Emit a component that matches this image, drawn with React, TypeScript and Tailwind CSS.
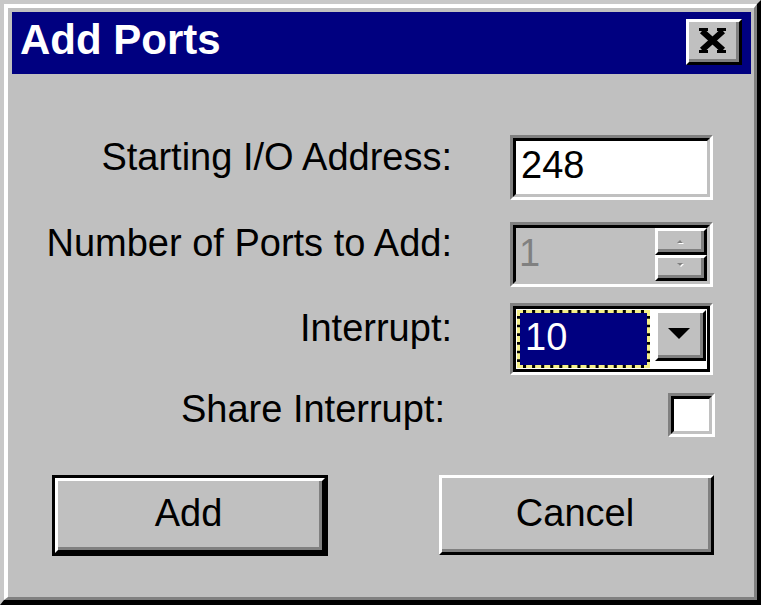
import React from "react";

const font = { fontFamily: '"Liberation Sans", Arial, sans-serif' };

const Sunken = ({ className, inner, children }: { className: string; inner: string; children: React.ReactNode }) => (
  <div className={`border-[3px] border-t-[#808080] border-l-[#808080] border-b-white border-r-white ${className}`}>
    <div className={`h-full w-full border-[3px] ${inner}`}>{children}</div>
  </div>
);

const Label = ({ text, className }: { text: string; className: string }) => (
  <div className={`w-[440px] shrink-0 text-right text-[38px] leading-[38px] text-black ${className}`}>{text}</div>
);

const SpinButton = ({ up }: { up: boolean }) => (
  <div className="h-[27px] border-[3px] border-t-white border-l-white border-b-black border-r-black bg-[#c0c0c0]">
    <div className="flex h-full items-center justify-center border-b-[3px] border-r-[3px] border-[#808080]">
      <svg width="12" height="8" viewBox="0 0 12 8">
        {up ? (
          <>
            <polygon points="3,7 9,7 6,4" fill="#ffffff" transform="translate(1,1)" />
            <polygon points="3,7 9,7 6,4" fill="#808080" />
          </>
        ) : (
          <>
            <polygon points="3,1 9,1 6,4" fill="#ffffff" transform="translate(1,1)" />
            <polygon points="3,1 9,1 6,4" fill="#808080" />
          </>
        )}
      </svg>
    </div>
  </div>
);

export default function App() {
  return (
    <div className="w-[761px] h-[605px] bg-[#c0c0c0] select-none" style={font}>
      <div className="h-full border-t-4 border-l-4 border-r-4 border-b-[5px] border-t-[#c8c8c8] border-l-[#c8c8c8] border-r-black border-b-black">
        <div className="flex h-full flex-col border-t-4 border-l-4 border-r-[3px] border-b-[3px] border-t-white border-l-white border-r-[#808080] border-b-[#808080] pt-[4px] pl-[4px] pr-[3px]">
          {/* title bar */}
          <div className="flex h-[62px] shrink-0 items-start justify-between bg-[#000080]">
            <div className="ml-[8px] pt-[7px] text-[42px] font-bold leading-[42px] text-white">Add Ports</div>
            <div className="mr-[9px] mt-[7px] h-[46px] w-[56px] border-[3px] border-t-white border-l-white border-b-black border-r-black bg-[#c0c0c0]">
              <div className="flex h-full items-center justify-center border-b-[3px] border-r-[3px] border-[#808080]">
                <svg width="27" height="25" viewBox="0 0 27 25">
                  <path d="M3 3 L24 22 M24 3 L3 22" stroke="#000" strokeWidth="6" strokeLinecap="butt" />
                  <path d="M0 1.5 H9 M18 1.5 H27 M0 23.5 H9 M18 23.5 H27" stroke="#000" strokeWidth="3" />
                </svg>
              </div>
            </div>
          </div>

          {/* body */}
          <div className="flex flex-1 flex-col pt-[61px]">
            <div className="flex h-[65px] items-start">
              <Label text="Starting I/O Address:" className="pt-[3px]" />
              <Sunken className="ml-[58px] h-[65px] w-[203px]" inner="border-t-black border-l-black border-b-[#c0c0c0] border-r-[#c0c0c0] bg-white">
                <div className="pl-[5px] pt-[5px] text-[38px] leading-[38px] text-black">248</div>
              </Sunken>
            </div>

            <div className="mt-[22px] flex h-[65px] items-start">
              <Label text="Number of Ports to Add:" className="pt-[2px]" />
              <Sunken className="ml-[58px] h-[65px] w-[203px]" inner="border-t-black border-l-black border-b-[#c0c0c0] border-r-[#c0c0c0] bg-[#c0c0c0]">
                <div className="flex h-full">
                  <div className="flex-1 pl-[3px] pt-[6px] text-[38px] leading-[38px] text-[#808080]">1</div>
                  <div className="flex w-[52px] flex-col">
                    <SpinButton up />
                    <SpinButton up={false} />
                  </div>
                </div>
              </Sunken>
            </div>

            <div className="mt-[16px] flex h-[72px] items-start">
              <Label text="Interrupt:" className="pt-[6px]" />
              <Sunken className="ml-[58px] h-[72px] w-[203px]" inner="border-black bg-white">
                <div className="flex h-full gap-[5px] p-[1px] pl-[1px]">
                  <div className="h-full flex-1 bg-black">
                    <div className="h-full border-[3px] border-dashed border-[#f4f08a] bg-[#000080] bg-clip-padding pl-[5px] pt-[5px] text-[38px] leading-[38px] text-white">
                      10
                    </div>
                  </div>
                  <div className="h-[51px] w-[51px] border-[3px] border-t-white border-l-white border-b-black border-r-black bg-[#c0c0c0]">
                    <div className="flex h-full items-center justify-center border-b-[3px] border-r-[3px] border-[#808080]">
                      <svg width="22" height="12" viewBox="0 0 22 12">
                        <polygon points="0,0 22,0 11,11" fill="#000" />
                      </svg>
                    </div>
                  </div>
                </div>
              </Sunken>
            </div>

            <div className="mt-[15px] flex h-[47px] items-start">
              <Label text="Share Interrupt:" className="pr-[7px]" />
              <Sunken className="ml-[216px] mt-[3px] h-[44px] w-[47px]" inner="border-t-black border-l-black border-b-[#c0c0c0] border-r-[#c0c0c0] bg-white">
                <div />
              </Sunken>
            </div>

            <div className="mt-[38px] flex items-start">
              <div className="ml-[40px] h-[81px] w-[276px] border-[3px] border-black">
                <div className="h-full border-[3px] border-t-white border-l-white border-b-black border-r-black">
                  <div className="flex h-full items-center justify-center border-b-[3px] border-r-[3px] border-[#808080] pb-[2px] text-[38px] leading-[38px] text-black">
                    Add
                  </div>
                </div>
              </div>
              <div className="ml-[111px] h-[80px] w-[275px] border-[3px] border-t-white border-l-white border-b-black border-r-black">
                <div className="flex h-full items-center justify-center border-b-[3px] border-r-[3px] border-[#808080] pb-[2px] text-[38px] leading-[38px] text-black">
                  Cancel
                </div>
              </div>
            </div>
          </div>
        </div>
      </div>
    </div>
  );
}
